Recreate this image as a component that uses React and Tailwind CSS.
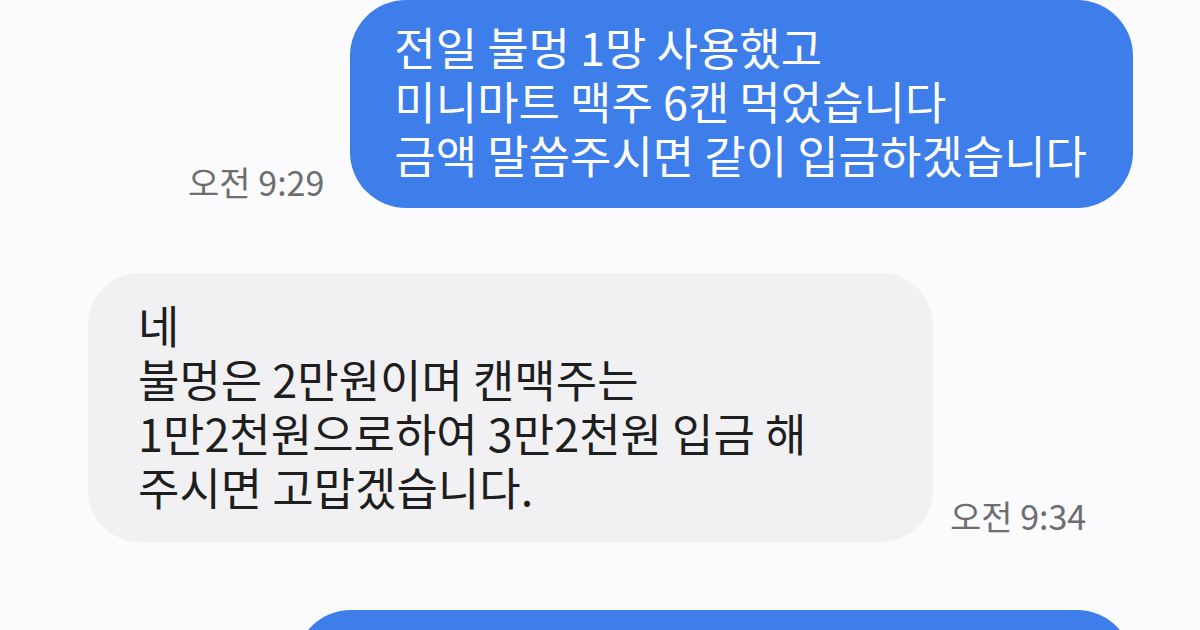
import React from 'react';

const font = { fontFamily: '"Noto Sans CJK KR", "Noto Sans", sans-serif' };

const SentBubble = ({ lines, time }) => (
  <div className="flex justify-end items-end gap-[26px] pr-[67px]">
    {time && (
      <span className="mb-[9px] text-[34px] leading-[34px] text-[#6e6e70] whitespace-nowrap">{time}</span>
    )}
    <div className="rounded-[56px] bg-[#3d7eea] pl-[44px] pr-[46px] pt-[20px] pb-[26px] text-[45px] leading-[54px] text-white whitespace-nowrap">
      {lines.map((l, i) => (
        <div key={i}>{l}</div>
      ))}
    </div>
  </div>
);

const ReceivedBubble = ({ lines, time }) => (
  <div className="flex items-end gap-[17px] pl-[88px]">
    <div className="w-[845px] rounded-[52px] bg-[#f1f1f3] pl-[50px] pr-6 pt-[25px] pb-[28px] text-[45px] leading-[54px] text-[#1e1e1e] whitespace-nowrap">
      {lines.map((l, i) => (
        <div key={i}>{l}</div>
      ))}
    </div>
    <span className="mb-[9px] text-[34px] leading-[34px] text-[#6e6e70] whitespace-nowrap">{time}</span>
  </div>
);

export default function App() {
  return (
    <div className="w-[1200px] h-[630px] overflow-hidden bg-[#fbfbfd]" style={font}>
      <div className="flex flex-col">
        <SentBubble
          time="오전 9:29"
          lines={['전일 불멍 1망 사용했고', '미니마트 맥주 6캔 먹었습니다', '금액 말씀주시면 같이 입금하겠습니다']}
        />
        <div className="mt-[65px]">
          <ReceivedBubble
            time="오전 9:34"
            lines={['네', '불멍은 2만원이며 캔맥주는', '1만2천원으로하여 3만2천원 입금 해', '주시면 고맙겠습니다.']}
          />
        </div>
        <div className="mt-[68px] flex justify-end pr-[67px]">
          <div className="w-[838px] h-[120px] rounded-[56px] bg-[#3d7eea]" />
        </div>
      </div>
    </div>
  );
}
